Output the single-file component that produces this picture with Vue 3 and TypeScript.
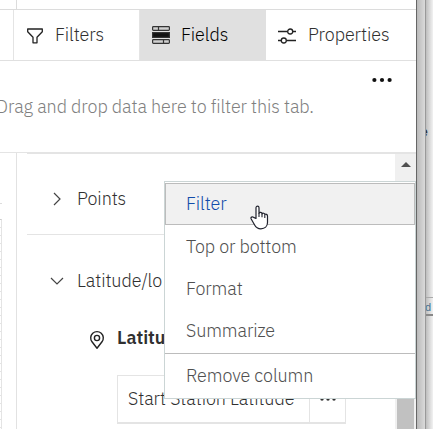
<script setup lang="ts">
interface MenuItem { label: string; key: string }
const items: MenuItem[] = [
  { label: 'Filter', key: 'filter' },
  { label: 'Top or bottom', key: 'top' },
  { label: 'Format', key: 'format' },
  { label: 'Summarize', key: 'summarize' },
  { label: 'Remove column', key: 'remove' },
]
</script>

<template>
  <div class="screen">
    <main class="panel">
      <div class="strip"><i></i></div>
      <nav class="tabs">
        <div class="tab filters">
          <svg width="18" height="18" viewBox="0 0 18 18" fill="none" stroke="#222" stroke-width="1.3"><path d="M1.7 2h14.6v2.7L11 10.3v5.5H7v-5.5L1.7 4.7z" stroke-linejoin="round" /></svg>
          <span>Filters</span>
        </div>
        <div class="tab fields">
          <svg width="20" height="20" viewBox="0 0 20 20" fill="none" stroke="#333" stroke-width="1.2"><rect x="1.6" y="1.6" width="16.8" height="3.8" rx=".8" fill="#d0d0d0" /><path d="M7.5 2v3" /><rect x="1.6" y="7.6" width="16.8" height="4.8" fill="#111" /><rect x="1.6" y="14.6" width="16.8" height="3.8" rx=".8" fill="#d0d0d0" /><path d="M12.5 15v3" /></svg>
          <span>Fields</span>
        </div>
        <div class="tab properties">
          <svg width="18" height="18" viewBox="0 0 18 18" fill="none" stroke="#222" stroke-width="1.3"><path d="M0 4.5h9.5M15 4.5h3M0 13.5h3M8.5 13.5H18" /><circle cx="12.2" cy="4.5" r="2.5" /><circle cx="5.8" cy="13.5" r="2.5" /></svg>
          <span>Properties</span>
        </div>
      </nav>
      <section class="drop">
        <svg class="more" width="20" height="6" viewBox="0 0 20 6" fill="#111"><circle cx="2.4" cy="3" r="2.1" /><circle cx="10" cy="3" r="2.1" /><circle cx="17.6" cy="3" r="2.1" /></svg>
        <p>Drag and drop data here to filter this tab.</p>
      </section>
      <section class="body">
        <div class="gutter"><div class="tick"></div><div class="ruler"></div></div>
        <div class="slots">
          <div class="row points">
            <svg width="12" height="14" viewBox="0 0 12 14" fill="none" stroke="#444" stroke-width="1.2"><path d="M3 1l6 6-6 6" /></svg>
            <span>Points</span>
          </div>
          <div class="row latlong">
            <svg width="14" height="12" viewBox="0 0 14 12" fill="none" stroke="#444" stroke-width="1.2"><path d="M1 3l6 6 6-6" /></svg>
            <span>Latitude/lo</span>
          </div>
          <div class="slot">
            <svg width="16" height="20" viewBox="0 0 16 20" fill="none" stroke="#222" stroke-width="1.4"><path d="M8 18.2L3 11.8A6.3 6.3 0 1 1 13 11.8z" stroke-linejoin="round" /><circle cx="8" cy="8" r="2.6" /></svg>
            <b>Latitude</b>
          </div>
          <div class="card"><span>Start Station Latitude</span><div class="card-more"><svg width="18" height="4" viewBox="0 0 18 4" fill="#333"><circle cx="3" cy="2" r="1.7" /><circle cx="9" cy="2" r="1.7" /><circle cx="15" cy="2" r="1.7" /></svg></div></div>
        </div>
        <div class="scroll"><div class="up"><svg width="10" height="5" viewBox="0 0 10 5"><path d="M0 5L5 0l5 5z" fill="#505050" /></svg></div><div class="thumb"></div></div>
      </section>
    </main>
    <aside class="behind">
      <div class="shade"></div>
      <div class="other"><span class="frag-e">e</span><div class="frag-d">d</div></div>
    </aside>
    <div class="menu">
      <div v-for="i in items" :key="i.key" class="item" :class="i.key"><span>{{ i.label }}</span></div>
    </div>
    <svg class="cursor" width="19" height="25" viewBox="0 0 19 25"><path d="M6 13.5V2.8C6 .6 9 .6 9 2.8v5.4c.5-1.2 2.8-1 3 .6.7-1 2.6-.7 2.8.7.9-.7 2.7-.2 2.7 1.5v6.5c0 4-2.8 6.3-6.6 6.3-3.3 0-5-1.4-6.4-4.1L1.2 14c-.9-1.9 1.2-2.6 2.4-1.6z" fill="#fff" stroke="#20222d" stroke-width="1.2" stroke-linejoin="round" /><path d="M9 8v4M12 9v3.3M14.8 10v3" stroke="#20222d" stroke-width="1.1" /></svg>
  </div>
</template>

<style>
body { overflow: hidden; }
</style>
<style scoped>
* { box-sizing: border-box; }
.screen { position: relative; display: flex; width: 433px; height: 429px; overflow: hidden; background: #fff; font: 300 18px/24px "IBM Plex Sans", Roboto, sans-serif; letter-spacing: -0.09px; color: #303030; }
span, b, p { white-space: nowrap; }
svg { flex: none; display: block; }
.panel { width: 416px; display: flex; flex-direction: column; overflow: hidden; }
.strip { height: 10px; flex: none; border-bottom: 1px solid #dcdcdc; padding-left: 16px; }
.strip i { display: block; width: 1px; height: 9px; background: #dcdcdc; }
.tabs { height: 51px; flex: none; display: flex; border-bottom: 1px solid #e0e0e0; padding-left: 13px; }
.tab { display: flex; align-items: center; height: 50px; }
.filters { width: 127px; border-left: 1px solid #e4e4e4; border-right: 1px solid #e4e4e4; padding-left: 12px; gap: 11px; }
.filters svg { margin-top: 2px; }
.fields { width: 126px; background: #e0e0e0; color: #000; padding-left: 11px; gap: 10px; }
.properties { padding-left: 12px; gap: 12px; }
.properties svg { margin-top: 2px; }
.drop { height: 92px; flex: none; border-bottom: 1px solid #e4e4e4; display: flex; flex-direction: column; }
.more { margin: 16px 0 0 372px; }
.drop p { margin: 12px 0 0 -4px; color: #808080; }
.body { flex: 1; min-height: 0; display: flex; }
.gutter { width: 17px; border-right: 1px solid #e2e2e2; }
.tick { margin-top: 50px; width: 2px; height: 1px; background: #ddd; }
.ruler { margin-top: 15px; width: 2px; height: 220px; border-right: 1px solid #e4e4e4; border-top: 1px solid #ccc; background: repeating-linear-gradient(#fff 0 7px, #e4e4e4 7px 8px); }
.slots { margin-left: 10px; width: 368px; border-top: 1px solid #e4e4e4; overflow: hidden; }
.row { display: flex; align-items: center; }
.points { height: 81px; border-bottom: 1px solid #e4e4e4; padding: 9px 0 0 24px; gap: 14px; }
.latlong { height: 92px; padding: 0 0 0 23px; gap: 13px; }
.slot { height: 48px; display: flex; align-items: flex-start; padding: 3px 0 0 62px; gap: 12px; color: #303030; letter-spacing: 0; }
.slot b { font-weight: 600; margin-top: -4px; }
.card { width: 229px; height: 49px; margin-left: 90px; border: 1px solid #e4e4e4; border-bottom-width: 2px; display: flex; align-items: center; justify-content: space-between; padding: 0 0 0 10px; }
.card-more { width: 36px; height: 100%; border-left: 1px solid #e4e4e4; display: flex; align-items: center; justify-content: center; }
.scroll { width: 21px; display: flex; flex-direction: column; border-top: 1px solid #e4e4e4; background: #f0f0f0; }
.up { height: 25px; display: flex; align-items: center; justify-content: center; padding-bottom: 4px; }
.thumb { margin: 17px 2px 0 2px; flex: 1; background: #c1c1c1; }
.behind { width: 17px; display: flex; border-left: 1px solid #666; }
.shade { width: 9px; background: linear-gradient(90deg, #bababa, #dadada); border-right: 1px solid #999; }
.other { width: 7px; background: linear-gradient(90deg, #bebebe, #f2f2f2); overflow: hidden; display: flex; flex-direction: column; font-size: 12px; line-height: 16px; }
.frag-e { margin-top: 124px; margin-left: -5px; font-weight: 600; }
.frag-d { margin: 157px 0 0 -1px; height: 19px; border-top: 1px solid #aaa; border-bottom: 2px solid #888; font: 11px/19px "Liberation Sans", sans-serif; color: #48718f; }
.menu { position: absolute; left: 164px; top: 181px; width: 252px; height: 218px; background: #fff; border: 1px solid #cbd5d5; padding-top: 1px; color: #505050; }
.item { height: 43px; padding-left: 21px; display: flex; align-items: center; }
.item.filter { height: 42px; width: 250px; border: 1px solid #bcbcbc; background: #f1f1f1; color: #124caa; padding-left: 20px; }
.item.top { height: 43px; }
.item.format { height: 42px; }
.item.summarize { height: 43px; padding-bottom: 1px; }
.item.remove { height: 45px; border-top: 1px solid #bcbcbc; }
.cursor { position: absolute; left: 250px; top: 205px; }
</style>
